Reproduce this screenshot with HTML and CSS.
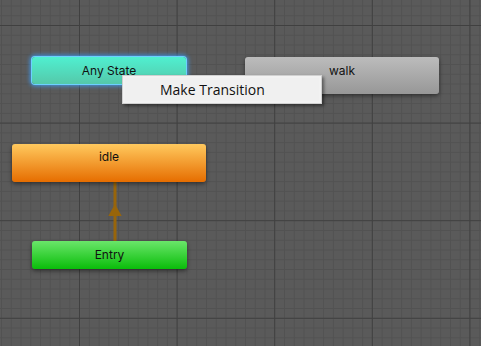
FILE: index.html
```html
<!DOCTYPE html>
<html>
<head>
<meta charset="utf-8">
<link rel="stylesheet" href="styles.css">
</head>
<body>
<div class="canvas">
  <svg class="grid" width="481" height="346" xmlns="http://www.w3.org/2000/svg">
    <defs>
      <pattern id="minor" patternUnits="userSpaceOnUse" x="1" y="25" width="9.76" height="9.76">
        <rect x="0" y="0" width="1" height="9.76" fill="#525252"/>
        <rect x="0" y="0" width="9.76" height="1" fill="#525252"/>
      </pattern>
      <pattern id="major" patternUnits="userSpaceOnUse" x="79" y="25" width="97.6" height="97.6">
        <rect x="0" y="0" width="1" height="97.6" fill="#404040"/>
        <rect x="0" y="0" width="97.6" height="1" fill="#404040"/>
      </pattern>
    </defs>
    <rect width="481" height="346" fill="#5a5a5a"/>
    <rect width="481" height="346" fill="url(#minor)"/>
    <rect width="481" height="346" fill="url(#major)"/>
  </svg>

  <svg class="link" width="20" height="62" xmlns="http://www.w3.org/2000/svg">
    <rect x="8.5" y="0" width="3" height="62" fill="#98650a"/>
    <polygon points="10,23 16.7,35 3.3,35" fill="#98650a"/>
  </svg>

  <div class="node any">Any State</div>
  <div class="node walk">walk</div>
  <div class="node idle">idle</div>
  <div class="node entry">Entry</div>

  <div class="menu">
    <div class="menu-item">Make Transition</div>
  </div>
</div>
</body>
</html>
```

FILE: styles.css
```css
html, body {
  margin: 0;
  padding: 0;
  background: #5a5a5a;
}

.canvas {
  position: relative;
  width: 481px;
  height: 346px;
  overflow: hidden;
  font-family: "Inter", "Noto Sans", "Liberation Sans", sans-serif;
}

.grid {
  position: absolute;
  left: 0;
  top: 0;
  display: block;
}

.link {
  position: absolute;
  left: 105px;
  top: 181px;
  display: block;
}

.node {
  position: absolute;
  box-sizing: border-box;
  border-radius: 3px;
  font-size: 12px;
  color: #111;
  text-align: center;
  box-shadow: 0 2px 4px rgba(0, 0, 0, 0.45);
}

.any {
  left: 32px;
  top: 57px;
  width: 154px;
  height: 27px;
  line-height: 27px;
  background: linear-gradient(to bottom, #4ff0d0, #55c8aa);
  box-shadow: 0 0 0 1px #6cd0ff, 0 0 4px 2px rgba(60, 160, 255, 0.85);
}

.walk {
  left: 245px;
  top: 57px;
  width: 194px;
  height: 37px;
  padding-top: 6px;
  line-height: 16px;
  background: linear-gradient(to bottom, #bcbcbc, #979797);
}

.idle {
  left: 12px;
  top: 144px;
  width: 194px;
  height: 38px;
  padding-top: 5px;
  line-height: 16px;
  background: linear-gradient(to bottom, #ffc95e, #e66d00);
}

.entry {
  left: 32px;
  top: 241px;
  width: 155px;
  height: 28px;
  line-height: 28px;
  background: linear-gradient(to bottom, #6ae66a, #0abd0a);
}

.menu {
  position: absolute;
  left: 122px;
  top: 75px;
  width: 200px;
  height: 29px;
  box-sizing: border-box;
  background: #f2f2f2;
  border: 1px solid #d0d0d0;
  box-shadow: 2px 2px 3px rgba(0, 0, 0, 0.45);
  padding: 2px;
}

.menu-item {
  height: 23px;
  line-height: 23px;
  padding-left: 35px;
  font-family: "Open Sans", "Noto Sans", "Liberation Sans", sans-serif;
  font-size: 14px;
  color: #111;
  background: #f0f0f0;
}
```
